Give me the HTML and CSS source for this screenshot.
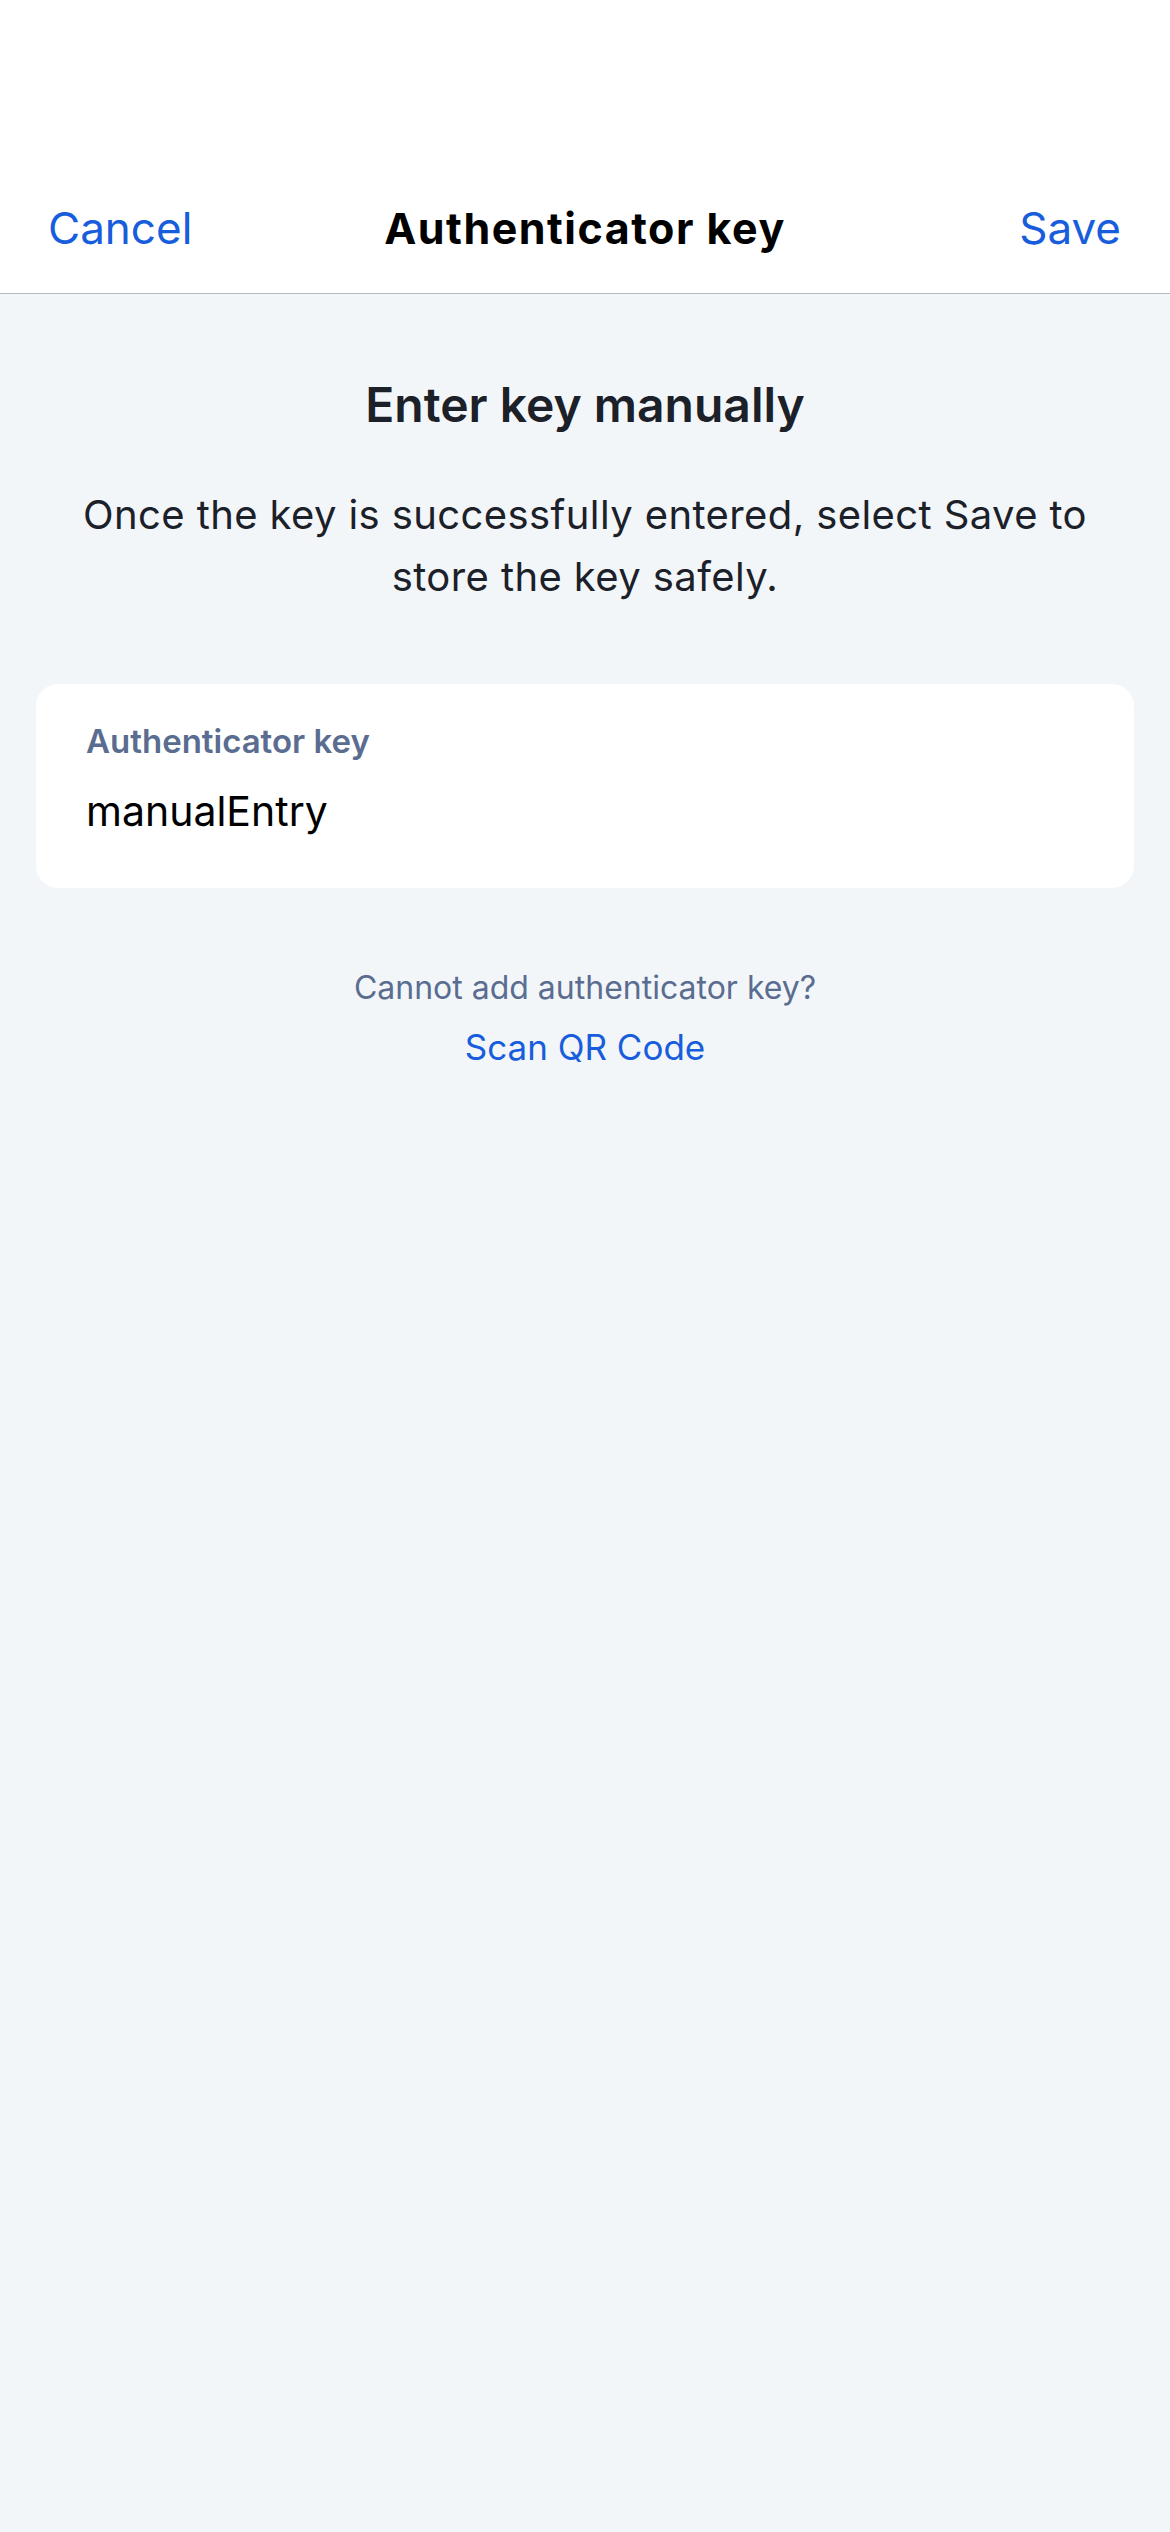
FILE: index.html
```html
<!DOCTYPE html>
<html lang="en">
<head>
<meta charset="utf-8">
<title>Authenticator key</title>
<link rel="stylesheet" href="styles.css">
</head>
<body>
<div class="screen">
  <header class="topbar">
    <nav class="navrow">
      <span class="nav-btn">Cancel</span>
      <span class="nav-title">Authenticator key</span>
      <span class="nav-btn">Save</span>
    </nav>
  </header>
  <main class="content">
    <h1 class="heading">Enter key manually</h1>
    <p class="intro">Once the key is successfully entered, select Save to store the key safely.</p>
    <section class="field-card">
      <div class="field-label">Authenticator key</div>
      <div class="field-value">manualEntry</div>
    </section>
    <div class="alt">
      <div class="alt-question">Cannot add authenticator key?</div>
      <div class="alt-link">Scan QR Code</div>
    </div>
  </main>
</div>
</body>
</html>
```
FILE: styles.css
```css
* { box-sizing: border-box; }
html, body {
  margin: 0;
  padding: 0;
}
body {
  font-family: Inter, "Noto Sans", "Liberation Sans", sans-serif;
  background: #F3F6F9;
  color: #1B2029;
}
.screen {
  width: 1170px;
  min-height: 2532px;
  background: #F3F6F9;
}
.topbar {
  height: 294px;
  background: #FFFFFF;
  border-bottom: 1px solid #B6BAC0;
  display: flex;
  align-items: flex-end;
}
.navrow {
  width: 100%;
  height: 130px;
  display: flex;
  align-items: center;
  justify-content: space-between;
  padding: 0 49px 0 48px;
  position: relative;
}
.nav-btn {
  font-size: 44px;
  color: #175DDC;
  line-height: 52px;
}
.nav-title {
  position: absolute;
  left: 0;
  right: 0;
  text-align: center;
  font-size: 43px;
  font-weight: 700;
  letter-spacing: 1.5px;
  color: #000000;
  line-height: 52px;
  pointer-events: none;
}
.content {
  padding: 81px 36px 0;
  display: flex;
  flex-direction: column;
  align-items: center;
}
.heading {
  margin: 0;
  font-size: 48px;
  line-height: 60px;
  font-weight: 600;
  color: #1B2029;
  text-align: center;
}
.intro {
  margin: 49px 0 0;
  padding: 0 20px;
  font-size: 40px;
  letter-spacing: 0.4px;
  line-height: 62px;
  text-align: center;
  color: #1B2029;
}
.field-card {
  margin-top: 76px;
  width: 100%;
  background: #FFFFFF;
  border-radius: 22px;
  padding: 37px 50px 52px;
}
.field-label {
  font-size: 33px;
  line-height: 40px;
  font-weight: 600;
  color: #5A6D91;
}
.field-value {
  margin-top: 25px;
  font-size: 41px;
  line-height: 50px;
  color: #000000;
}
.alt {
  margin-top: 80px;
  display: flex;
  flex-direction: column;
  align-items: center;
}
.alt-question {
  font-size: 32px;
  line-height: 40px;
  color: #5A6D91;
}
.alt-link {
  margin-top: 16px;
  font-size: 35px;
  line-height: 46px;
  color: #175DDC;
}
```
